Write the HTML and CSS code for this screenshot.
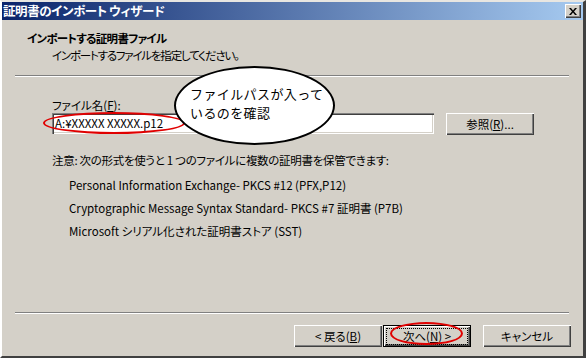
FILE: index.html
```html
<!DOCTYPE html>
<html lang="ja">
<head>
    <meta charset="UTF-8">
    <title>証明書のインポート ウィザード</title>
    <link rel="stylesheet" href="styles.css">
</head>
<body>
    <div class="window">
        <div class="titlebar">
            <span class="title">証明書のインポート ウィザード</span>
            <button class="close-button">
                <svg width="8" height="7" viewBox="0 0 8 7"><path d="M0 0h2l2 2.5 2-2.5h2l-3 3.5 3 3.5h-2l-2-2.5-2 2.5h-2l3-3.5z" fill="#000"/></svg>
            </button>
        </div>

        <div class="header">
            <div class="header-title">インポートする証明書ファイル</div>
            <div class="header-sub">インポートするファイルを指定してください。</div>
        </div>
        <div class="separator"></div>

        <div class="content">
            <span class="field-label">ファイル名(<u>F</u>):</span>
            <div class="field-row">
                <div class="text-input">A:¥XXXXX XXXXX.p12</div>
                <button class="button browse-button">参照(<u>R</u>)...</button>
            </div>
            <div class="note">注意: 次の形式を使うと 1 つのファイルに複数の証明書を保管できます:</div>
            <ul class="formats">
                <li>Personal Information Exchange- PKCS #12 (PFX,P12)</li>
                <li>Cryptographic Message Syntax Standard- PKCS #7 証明書 (P7B)</li>
                <li>Microsoft シリアル化された証明書ストア (SST)</li>
            </ul>
        </div>

        <div class="separator"></div>
        <div class="footer">
            <button class="button">&lt; 戻る(<u>B</u>)</button>
            <button class="button default-button"><span class="focus">次へ(<u>N</u>) &gt;</span></button>
            <button class="button cancel-button">キャンセル</button>
        </div>

        <!-- 注釈 -->
        <div class="mark mark-file"></div>
        <div class="mark mark-next"></div>
        <div class="balloon">ファイルパスが入って<br>いるのを確認</div>
    </div>
</body>
</html>
```

FILE: styles.css
```css
body {
    margin: 0;
    padding: 0;
    font-family: "Noto Sans CJK JP", "Liberation Sans", sans-serif;
    font-size: 11.5px;
    font-feature-settings: "palt";
    color: #000;
    background-color: #d4d0c8;
}
.window {
    position: relative;
    width: 586px;
    height: 358px;
    box-sizing: border-box;
    display: flex;
    flex-direction: column;
    background-color: #d4d0c8;
    border-top: 2px solid #e8e6e1;
    border-left: 2px solid #ffffff;
    border-right: 3px solid #404040;
    border-bottom: 2px solid #404040;
}
.titlebar {
    height: 18px;
    display: flex;
    align-items: center;
    justify-content: space-between;
    background: linear-gradient(to right, #0a246a, #a6caf0);
    padding-left: 1px;
    flex-shrink: 0;
}
.title {
    color: #fff;
    font-weight: bold;
    font-size: 12.5px;
    line-height: 18px;
    letter-spacing: -0.4px;
}
.close-button {
    width: 16px;
    height: 14px;
    margin-right: 2px;
    padding: 0;
    display: flex;
    align-items: center;
    justify-content: center;
    background-color: #d4d0c8;
    border: none;
    box-shadow: inset 1px 1px #fff, inset -1px -1px #404040, inset -2px -2px #808080;
}
.header {
    padding: 10px 0 0 25px;
    line-height: 16px;
}
.header-title {
    font-weight: bold;
    letter-spacing: -0.7px;
}
.header-sub {
    padding-left: 25px;
    margin-top: 1px;
    letter-spacing: -1.2px;
}
.separator {
    height: 0;
    border-top: 1px solid #808080;
    border-bottom: 1px solid #fff;
    margin: 0 14px 0 13px;
    flex-shrink: 0;
}
.header + .separator {
    margin-top: 12px;
}
.content {
    flex: 1;
    padding: 20px 0 0 50px;
    line-height: 16px;
}
.field-label {
    display: inline-block;
}
.field-row {
    display: flex;
    align-items: flex-start;
    gap: 12px;
}
.text-input {
    width: 382px;
    height: 21px;
    box-sizing: border-box;
    padding: 1px 3px;
    line-height: 18px;
    background-color: #fff;
    box-shadow: inset 1px 1px #808080, inset 2px 2px #404040, inset -1px -1px #fff, inset -2px -2px #d4d0c8;
}
.button {
    width: 88px;
    height: 22px;
    padding: 0;
    font-family: inherit;
    font-size: 11.5px;
    font-feature-settings: "palt";
    color: #000;
    background-color: #d4d0c8;
    border: none;
    box-shadow: inset 1px 1px #fff, inset -1px -1px #404040, inset -2px -2px #808080;
}
.note {
    margin-top: 17px;
    letter-spacing: -0.3px;
}
.formats {
    list-style: none;
    margin: 6px 0 0 0;
    padding-left: 17px;
}
.formats li {
    line-height: 23px;
}
.footer {
    display: flex;
    justify-content: flex-end;
    padding: 11px 12px 9px 0;
}
.default-button {
    margin-left: 1px;
    box-shadow: inset 0 0 0 1px #000, inset 2px 2px #fff, inset -2px -2px #404040, inset -3px -3px #808080;
}
.focus {
    display: inline-block;
    width: 80px;
    line-height: 15px;
    outline: 1px dotted #000;
}
.cancel-button {
    margin-left: 12px;
}
.mark {
    position: absolute;
    border: 2px solid #e00000;
    border-radius: 50%;
    box-sizing: border-box;
}
.mark-file {
    left: 41px;
    top: 110px;
    width: 142px;
    height: 22px;
}
.mark-next {
    left: 388px;
    top: 320px;
    width: 73px;
    height: 23px;
}
.balloon {
    position: absolute;
    left: 172px;
    top: 64px;
    width: 161px;
    height: 79px;
    box-sizing: border-box;
    padding: 16px 0 0 14px;
    background-color: #fff;
    border: 2px solid #000;
    border-radius: 50%;
    font-size: 13px;
    font-feature-settings: normal;
    letter-spacing: 0.4px;
    line-height: 19px;
}
```
